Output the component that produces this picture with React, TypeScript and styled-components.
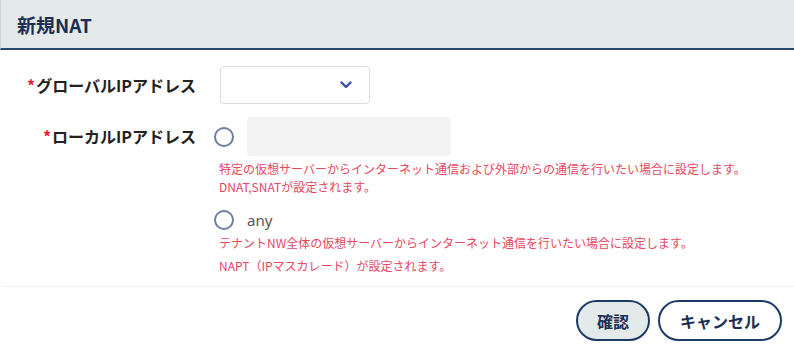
import styled, { createGlobalStyle } from "styled-components";

const GlobalStyle = createGlobalStyle`
    html, body {
        margin: 0;
        padding: 0;
        background: #ffffff;
        font-family: "Noto Sans CJK JP", "Noto Sans", sans-serif;
    }
`;

const Dialog = styled.div`
    width: 794px;
    height: 359px;
    display: flex;
    flex-direction: column;
    background: #ffffff;
    box-sizing: border-box;
`;

const Header = styled.header`
    height: 48px;
    display: flex;
    align-items: center;
    padding: 0 16px;
    background: #e4e9e9;
    border-bottom: 2px solid #2c4770;
    border-left: 1px solid #d3d9da;
`;

const Title = styled.h1`
    margin: 0;
    font-size: 19px;
    font-weight: 700;
    color: #1b2f55;
`;

const Content = styled.div`
    flex: 1;
    display: flex;
    flex-direction: column;
`;

const Body = styled.div`
    padding: 16px 0 0;
    display: flex;
    flex-direction: column;
    gap: 13px;
`;

const FormRow = styled.div<{ align?: string }>`
    display: grid;
    grid-template-columns: 196px 1fr;
    column-gap: 18px;
    align-items: ${props => props.align || "center"};
`;

const Label = styled.label`
    text-align: right;
    font-size: 16px;
    font-weight: 700;
    color: #222222;
    line-height: 38px;
`;

const Required = styled.span`
    color: #e8202c;
    font-weight: 700;
    margin-right: 1px;
`;

const SelectBox = styled.div`
    width: 150px;
    height: 38px;
    margin-left: 6px;
    box-sizing: border-box;
    border: 1px solid #d9dcdf;
    border-radius: 4px;
    display: flex;
    align-items: center;
    justify-content: flex-end;
    padding-right: 17px;
`;

const Options = styled.div`
    display: flex;
    flex-direction: column;
`;

const OptionLine = styled.div`
    display: flex;
    align-items: center;
    gap: 13px;
`;

const AnyOption = styled(OptionLine)`
    margin-top: 14px;
    height: 20px;
`;

const Radio = styled.span`
    width: 20px;
    height: 20px;
    box-sizing: border-box;
    border: 2px solid #6d7f9c;
    border-radius: 50%;
    flex-shrink: 0;
`;

const TextInput = styled.div`
    width: 204px;
    height: 39px;
    border-radius: 4px;
    background: #f3f3f3;
`;

const OptionText = styled.span`
    font-family: "Noto Sans", sans-serif;
    font-size: 15px;
    color: #555555;
`;

const Help = styled.p`
    margin: 4px 0 0 5px;
    font-size: 12px;
    line-height: 18px;
    color: #e8465f;
`;

const HelpLine = styled.span<{ spaced?: boolean }>`
    display: block;
    margin-top: ${props => (props.spaced ? 5 : 0)}px;
`;

const Divider = styled.hr`
    margin: auto 0 0 3px;
    border: none;
    border-top: 1px solid #eeeeee;
`;

const Footer = styled.footer`
    display: flex;
    justify-content: flex-end;
    gap: 8px;
    padding: 13px 12px 18px;
`;

const Button = styled.button<{ primary?: boolean }>`
    height: 41px;
    padding: 0 ${props => (props.primary ? 19 : 20)}px;
    border: 2px solid #1b3b67;
    border-radius: 21px;
    background: ${props => (props.primary ? "#e4e9e9" : "#ffffff")};
    color: #1b2f55;
    font-family: "Noto Sans CJK JP", sans-serif;
    font-size: 16px;
    font-weight: 700;
    cursor: pointer;
`;

export default function App() {
    return (
        <>
            <GlobalStyle />
            <Dialog>
                <Header>
                    <Title>新規NAT</Title>
                </Header>
                <Content>
                    <Body>
                        <FormRow>
                            <Label><Required>*</Required>グローバルIPアドレス</Label>
                            <div>
                                <SelectBox>
                                    <svg width="12" height="8" viewBox="0 0 12 8">
                                        <path d="M1.5 1.5 L6 6 L10.5 1.5" fill="none" stroke="#3c4bb0" strokeWidth="2.4" strokeLinecap="round" strokeLinejoin="round" />
                                    </svg>
                                </SelectBox>
                            </div>
                        </FormRow>
                        <FormRow align="start">
                            <Label><Required>*</Required>ローカルIPアドレス</Label>
                            <Options>
                                <OptionLine>
                                    <Radio />
                                    <TextInput />
                                </OptionLine>
                                <Help>
                                    <HelpLine>特定の仮想サーバーからインターネット通信および外部からの通信を行いたい場合に設定します。</HelpLine>
                                    <HelpLine>DNAT,SNATが設定されます。</HelpLine>
                                </Help>
                                <AnyOption>
                                    <Radio />
                                    <OptionText>any</OptionText>
                                </AnyOption>
                                <Help>
                                    <HelpLine>テナントNW全体の仮想サーバーからインターネット通信を行いたい場合に設定します。</HelpLine>
                                    <HelpLine spaced>NAPT（IPマスカレード）が設定されます。</HelpLine>
                                </Help>
                            </Options>
                        </FormRow>
                    </Body>
                    <Divider />
                    <Footer>
                        <Button primary>確認</Button>
                        <Button>キャンセル</Button>
                    </Footer>
                </Content>
            </Dialog>
        </>
    );
}
